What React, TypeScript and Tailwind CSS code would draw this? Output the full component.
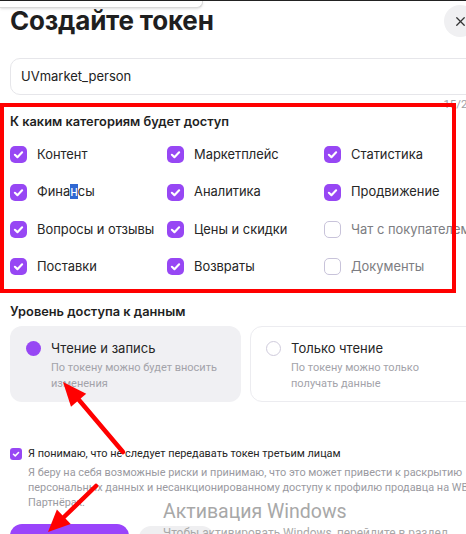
import React from 'react';
import { X } from 'lucide-react';

const categories = [
	{ label: 'Контент', checked: true },
	{ label: 'Маркетплейс', checked: true },
	{ label: 'Статистика', checked: true },
	{ label: 'Финансы', checked: true, highlight: true },
	{ label: 'Аналитика', checked: true },
	{ label: 'Продвижение', checked: true },
	{ label: 'Вопросы и отзывы', checked: true },
	{ label: 'Цены и скидки', checked: true },
	{ label: 'Чат с покупателем', checked: false },
	{ label: 'Поставки', checked: true },
	{ label: 'Возвраты', checked: true },
	{ label: 'Документы', checked: false },
];

const small = { fontFamily: 'Roboto, "Noto Sans", sans-serif' };

const CheckBox = ({ checked, small }: { checked: boolean; small?: boolean }) => {
	const size = small ? 'w-[12px] h-[12px] rounded-[3px]' : 'w-[17px] h-[17px] rounded-[5px]';
	if (!checked) {
		return <span className={`${size} shrink-0 border-[1.5px] border-[#c8c3da] bg-white`} />;
	}
	return (
		<span className={`${size} shrink-0 bg-[#9747f4] flex items-center justify-center`}>
			<svg viewBox="0 0 16 16" className="w-full h-full">
				<path d="M4.6 8.3 L7 10.5 L11.4 5.9" fill="none" stroke="white" strokeWidth="2" strokeLinecap="round" strokeLinejoin="round" />
			</svg>
		</span>
	);
};

// Финансы с выделенной буквой "н"
const renderLabel = (label: string, highlight?: boolean) => {
	if (!highlight) return label;
	return (
		<>
			Фина<span className="bg-[#2f67d2] text-white">н</span>сы
		</>
	);
};

export default function App() {
	return (
		<div className="relative w-[466px] h-[534px] overflow-hidden bg-white text-[#1f1f1f]" style={{ fontFamily: 'Inter, "Noto Sans", sans-serif' }}>
			{/* остаток всплывашки сверху */}
			<div className="absolute left-0 top-0 w-full h-[1px] bg-[#222]" />
			<div className="absolute left-0 top-[1px] w-[203px] h-[7px] bg-white border-b border-r border-[#d9d9d9] rounded-br-[6px] shadow-sm" />

			<div className="w-[471px] ml-[10px] pt-[4px] flex flex-col">
				<div className="flex items-center justify-between h-[34px]">
					<h1 className="text-[26px] font-bold tracking-[-0.2px] leading-[34px]">Создайте токен</h1>
					<button className="w-[32px] h-[32px] mr-[5px] rounded-full bg-[#f0f0f2] flex items-center justify-center text-[#333]">
						<X className="w-[15px] h-[15px]" strokeWidth={2} />
					</button>
				</div>

				<div className="mt-[20px] h-[37px] rounded-[10px] border border-[#e6e6ea] flex items-center px-[10px] text-[13px] text-[#222]">
					UVmarket_person
				</div>
				<div className="mt-[3px] h-[12px] pr-[7px] text-right text-[11.5px] leading-[12px] text-[#a0a0a6]" style={small}>15/25</div>

				<div className="mt-[3px] h-[18px] text-[12.8px] leading-[18px] font-semibold">К каким категориям будет доступ</div>

				<div className="mt-[5px] grid grid-cols-3">
					{categories.map((c) => (
						<div key={c.label} className="h-[37.4px] flex items-center gap-[10px] whitespace-nowrap">
							<CheckBox checked={c.checked} />
							<span className={`text-[12.9px] ${c.checked ? 'text-[#262626]' : 'text-[#7d7d82]'}`}>{renderLabel(c.label, c.highlight)}</span>
						</div>
					))}
				</div>

				<div className="mt-[17px] h-[18px] text-[12.8px] leading-[18px] font-semibold">Уровень доступа к данным</div>

				<div className="mt-[5px] grid grid-cols-2 gap-[9px]">
					<div className="h-[76px] rounded-[12px] bg-[#f0f0f3] pt-[12px] pl-[16px] flex gap-[10px]">
						<span className="mt-[3px] w-[15px] h-[15px] rounded-full bg-[#9747f4] shrink-0" />
						<div>
							<div className="text-[13px] leading-[20px] text-[#262626]">Чтение и запись</div>
							<div className="mt-[2px] text-[11px] leading-[16px] text-[#a3a3aa] whitespace-nowrap" style={small}>
								<div>По токену можно будет вносить</div>
								<div>изменения</div>
							</div>
						</div>
					</div>
					<div className="h-[76px] rounded-[12px] border border-[#ececf0] bg-white pt-[11px] pl-[15px] flex gap-[10px]">
						<span className="mt-[3px] w-[15px] h-[15px] rounded-full border-[1.5px] border-[#cfcbdc] shrink-0" />
						<div>
							<div className="text-[13px] leading-[20px] text-[#262626]">Только чтение</div>
							<div className="mt-[2px] text-[11px] leading-[16px] text-[#a3a3aa] whitespace-nowrap" style={small}>
								<div>По токену можно только</div>
								<div>получать данные</div>
							</div>
						</div>
					</div>
				</div>

				<div className="mt-[44px] h-[16px] flex items-center gap-[6px] whitespace-nowrap">
					<CheckBox checked small />
					<span className="text-[10.9px] leading-[16px] text-[#262626]" style={small}>Я понимаю, что не следует передавать токен третьим лицам</span>
				</div>
				<div className="ml-[18px] mt-[3px] text-[10.9px] leading-[15px] text-[#9a9aa1] whitespace-nowrap" style={small}>
					<div>Я беру на себя возможные риски и принимаю, что это может привести к раскрытию</div>
					<div>персональных данных и несанкционированному доступу к профилю продавца на WB</div>
					<div>Партнёрах.</div>
				</div>

				<div className="mt-[14px] flex gap-[10px]">
					<button className="w-[119px] h-[40px] rounded-[12px] bg-[#9a44fb]" />
					<button className="mt-[2px] w-[75px] h-[40px] rounded-[12px] bg-[#efeff1]" />
				</div>
			</div>

			{/* водяной знак активации */}
			<div className="absolute left-[163px] top-[501px] text-[#a8a8a8] whitespace-nowrap" style={small}>
				<div className="text-[19.5px] leading-[22px]">Активация Windows</div>
				<div className="text-[11.9px] leading-[18px] mt-[1px]">Чтобы активировать Windows, перейдите в раздел</div>
			</div>

			{/* красная рамка */}
			<div className="absolute left-0 top-[103px] w-[456px] h-[190px] border-4 border-[#ff0000]" />

			{/* стрелки */}
			<svg className="absolute left-0 top-0 pointer-events-none" width="466" height="534">
				<line x1="123" y1="452" x2="79" y2="400" stroke="#f00" strokeWidth="4.5" strokeLinecap="round" />
				<polygon points="63,382 86.2,393.8 71,406.8" fill="#f00" />
				<line x1="96" y1="486" x2="64" y2="517" stroke="#f00" strokeWidth="4.5" strokeLinecap="round" />
				<polygon points="48,532 56.9,509.6 70.7,524" fill="#f00" />
			</svg>
		</div>
	);
}
